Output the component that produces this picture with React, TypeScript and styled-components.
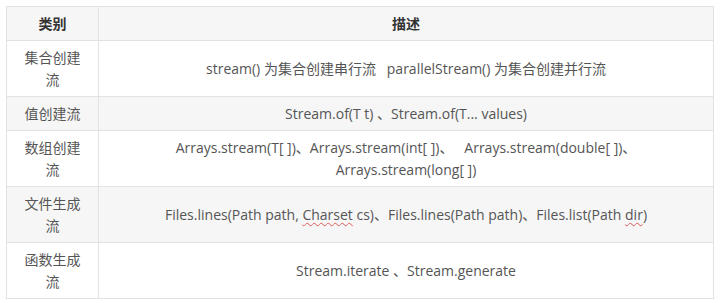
import React from 'react';
import styled, { createGlobalStyle } from 'styled-components';

const GlobalStyle = createGlobalStyle`
  body {
    margin: 0;
    background: #ffffff;
    font-family: "Open Sans", "Noto Sans CJK SC", sans-serif;
  }
`;

const Page = styled.div`
  padding: 6px 7px 6px 6px;
`;

const Table = styled.table`
  width: 708px;
  table-layout: fixed;
  border-collapse: collapse;
  font-size: 14px;
  line-height: 22px;
  color: #555555;
`;

const KindCol = styled.col`
  width: 92px;
`;

const Row = styled.tr<{ $striped: boolean }>`
  background: ${props => props.$striped ? '#f6f6f6' : '#ffffff'};
`;

const HeadCell = styled.th`
  border: 1px solid #e2e2e2;
  padding: 6px 12px 5px;
  font-weight: bold;
  color: #333333;
  text-align: center;
`;

const Cell = styled.td`
  border: 1px solid #e2e2e2;
  padding: 6px 12px 5px;
  text-align: center;
  vertical-align: middle;
`;

const Wavy = styled.span`
  text-decoration: underline wavy #e05a5a;
  text-decoration-thickness: 1px;
  text-underline-offset: 2px;
`;

const rows: { kind: string; desc: React.ReactNode }[] = [
  {
    kind: '集合创建流',
    desc: <>stream() 为集合创建串行流&nbsp;&nbsp;&nbsp;parallelStream() 为集合创建并行流</>,
  },
  {
    kind: '值创建流',
    desc: <>Stream.of(T t) 、Stream.of(T... values)</>,
  },
  {
    kind: '数组创建流',
    desc: <>Arrays.stream(T[ ])、Arrays.stream(int[ ])、&nbsp;&nbsp;&nbsp;Arrays.stream(double[ ])、<br />Arrays.stream(long[ ])</>,
  },
  {
    kind: '文件生成流',
    desc: <>Files.lines(Path path, <Wavy>Charset</Wavy> cs)、Files.lines(Path path)、Files.list(Path <Wavy>dir</Wavy>)</>,
  },
  {
    kind: '函数生成流',
    desc: <>Stream.iterate 、Stream.generate</>,
  },
];

export default function App() {
  return (
    <Page>
      <GlobalStyle />
      <Table>
        <colgroup>
          <KindCol />
          <col />
        </colgroup>
        <thead>
          <Row $striped>
            <HeadCell>类别</HeadCell>
            <HeadCell>描述</HeadCell>
          </Row>
        </thead>
        <tbody>
          {rows.map((r, i) => (
            <Row key={r.kind} $striped={i % 2 === 1}>
              <Cell>{r.kind}</Cell>
              <Cell>{r.desc}</Cell>
            </Row>
          ))}
        </tbody>
      </Table>
    </Page>
  );
}
